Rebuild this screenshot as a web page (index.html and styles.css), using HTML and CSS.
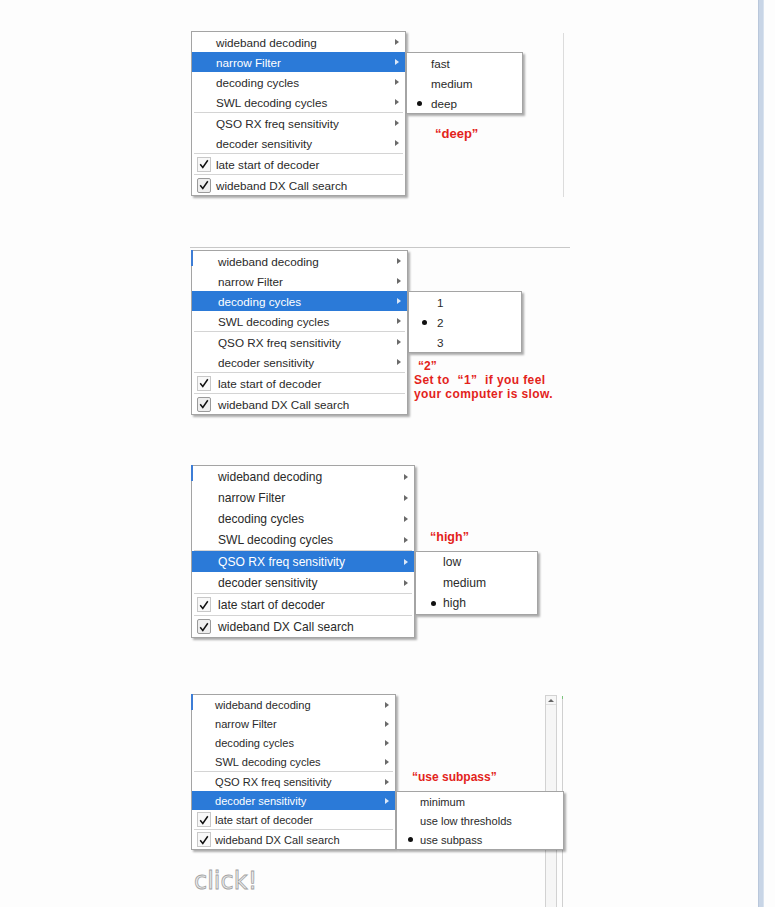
FILE: index.html
```html
<!DOCTYPE html>
<html lang="en">
<head>
<meta charset="utf-8">
<title>Decoder menu settings</title>
<link rel="stylesheet" href="styles.css">
</head>
<body>
<div class="page">
  <main class="content">

    <section class="fig fig1">
      <div class="menu">
        <div class="item"><span class="icon"></span><span class="label">wideband decoding</span><span class="arrow"></span></div>
        <div class="item active"><span class="icon"></span><span class="label">narrow Filter</span><span class="arrow"></span>
          <div class="submenu">
            <div class="sub-item"><span class="mark"></span>fast</div>
            <div class="sub-item"><span class="mark"></span>medium</div>
            <div class="sub-item"><span class="mark"><span class="dot"></span></span>deep</div>
          </div>
        </div>
        <div class="item"><span class="icon"></span><span class="label">decoding cycles</span><span class="arrow"></span></div>
        <div class="item"><span class="icon"></span><span class="label">SWL decoding cycles</span><span class="arrow"></span></div>
        <div class="sep"></div>
        <div class="item"><span class="icon"></span><span class="label">QSO RX freq sensitivity</span><span class="arrow"></span></div>
        <div class="item"><span class="icon"></span><span class="label">decoder sensitivity</span><span class="arrow"></span></div>
        <div class="sep"></div>
        <div class="item"><span class="icon"><span class="checkbox"><svg width="10" height="10" viewBox="0 0 10 10"><path d="M1.2 5.2 L3.8 8.4 L8.8 1.2" fill="none" stroke="#111" stroke-width="1.5"/></svg></span></span><span class="label">late start of decoder</span></div>
        <div class="sep"></div>
        <div class="item"><span class="icon"><span class="checkbox ghosted"><svg width="10" height="10" viewBox="0 0 10 10"><path d="M1.2 5.2 L3.8 8.4 L8.8 1.2" fill="none" stroke="#111" stroke-width="1.5"/></svg></span></span><span class="label">wideband DX Call search</span></div>
      </div>
      <div class="vline"></div>
      <div class="note note1">“deep”</div>
    </section>

    <section class="fig fig2">
      <div class="menu">
        <div class="item"><span class="icon"></span><span class="label">wideband decoding</span><span class="arrow"></span></div>
        <div class="item"><span class="icon"></span><span class="label">narrow Filter</span><span class="arrow"></span></div>
        <div class="item active"><span class="icon"></span><span class="label">decoding cycles</span><span class="arrow"></span>
          <div class="submenu">
            <div class="sub-item"><span class="mark"></span>1</div>
            <div class="sub-item"><span class="mark"><span class="dot"></span></span>2</div>
            <div class="sub-item"><span class="mark"></span>3</div>
          </div>
        </div>
        <div class="item"><span class="icon"></span><span class="label">SWL decoding cycles</span><span class="arrow"></span></div>
        <div class="sep"></div>
        <div class="item"><span class="icon"></span><span class="label">QSO RX freq sensitivity</span><span class="arrow"></span></div>
        <div class="item"><span class="icon"></span><span class="label">decoder sensitivity</span><span class="arrow"></span></div>
        <div class="sep"></div>
        <div class="item"><span class="icon"><span class="checkbox"><svg width="10" height="10" viewBox="0 0 10 10"><path d="M1.2 5.2 L3.8 8.4 L8.8 1.2" fill="none" stroke="#111" stroke-width="1.5"/></svg></span></span><span class="label">late start of decoder</span></div>
        <div class="sep"></div>
        <div class="item"><span class="icon"><span class="checkbox ghosted"><svg width="10" height="10" viewBox="0 0 10 10"><path d="M1.2 5.2 L3.8 8.4 L8.8 1.2" fill="none" stroke="#111" stroke-width="1.5"/></svg></span></span><span class="label">wideband DX Call search</span></div>
      </div>
      <div class="note note2"><span class="first">“2”</span><br>Set to <span class="wq-l">“</span>1<span class="wq-r">”</span> if you feel<br>your computer is slow.</div>
    </section>

    <section class="fig fig3">
      <div class="menu">
        <div class="item"><span class="icon"></span><span class="label">wideband decoding</span><span class="arrow"></span></div>
        <div class="item"><span class="icon"></span><span class="label">narrow Filter</span><span class="arrow"></span></div>
        <div class="item"><span class="icon"></span><span class="label">decoding cycles</span><span class="arrow"></span></div>
        <div class="item"><span class="icon"></span><span class="label">SWL decoding cycles</span><span class="arrow"></span></div>
        <div class="sep"></div>
        <div class="item active"><span class="icon"></span><span class="label">QSO RX freq sensitivity</span><span class="arrow"></span>
          <div class="submenu">
            <div class="sub-item"><span class="mark"></span>low</div>
            <div class="sub-item"><span class="mark"></span>medium</div>
            <div class="sub-item"><span class="mark"><span class="dot"></span></span>high</div>
          </div>
        </div>
        <div class="item"><span class="icon"></span><span class="label">decoder sensitivity</span><span class="arrow"></span></div>
        <div class="sep"></div>
        <div class="item"><span class="icon"><span class="checkbox"><svg width="10" height="10" viewBox="0 0 10 10"><path d="M1.2 5.2 L3.8 8.4 L8.8 1.2" fill="none" stroke="#111" stroke-width="1.5"/></svg></span></span><span class="label">late start of decoder</span></div>
        <div class="sep"></div>
        <div class="item"><span class="icon"><span class="checkbox ghosted"><svg width="10" height="10" viewBox="0 0 10 10"><path d="M1.2 5.2 L3.8 8.4 L8.8 1.2" fill="none" stroke="#111" stroke-width="1.5"/></svg></span></span><span class="label">wideband DX Call search</span></div>
      </div>
      <div class="note note3">“high”</div>
    </section>

    <section class="fig fig4">
      <div class="menu-col">
        <div class="menu">
          <div class="item"><span class="icon"></span><span class="label">wideband decoding</span><span class="arrow"></span></div>
          <div class="item"><span class="icon"></span><span class="label">narrow Filter</span><span class="arrow"></span></div>
          <div class="item"><span class="icon"></span><span class="label">decoding cycles</span><span class="arrow"></span></div>
          <div class="item"><span class="icon"></span><span class="label">SWL decoding cycles</span><span class="arrow"></span></div>
          <div class="sep"></div>
          <div class="item"><span class="icon"></span><span class="label">QSO RX freq sensitivity</span><span class="arrow"></span></div>
          <div class="item active"><span class="icon"></span><span class="label">decoder sensitivity</span><span class="arrow"></span>
            <div class="submenu">
              <div class="sub-item"><span class="mark"></span>minimum</div>
              <div class="sub-item"><span class="mark"></span>use low thresholds</div>
              <div class="sub-item"><span class="mark"><span class="dot"></span></span>use subpass</div>
            </div>
          </div>
          <div class="item"><span class="icon"><span class="checkbox"><svg width="10" height="10" viewBox="0 0 10 10"><path d="M1.2 5.2 L3.8 8.4 L8.8 1.2" fill="none" stroke="#111" stroke-width="1.5"/></svg></span></span><span class="label">late start of decoder</span></div>
          <div class="sep"></div>
          <div class="item"><span class="icon"><span class="checkbox"><svg width="10" height="10" viewBox="0 0 10 10"><path d="M1.2 5.2 L3.8 8.4 L8.8 1.2" fill="none" stroke="#111" stroke-width="1.5"/></svg></span></span><span class="label">wideband DX Call search</span></div>
        </div>
        <div class="click">click!</div>
      </div>
      <div class="scroll"><div class="scroll-up"><span class="up-tri"></span></div></div>
      <div class="rline"></div>
      <div class="note note4">“use subpass”</div>
    </section>

  </main>
  <div class="rule"></div>
  <div class="after"></div>
</div>
</body>
</html>
```

FILE: styles.css
```css
* { box-sizing: border-box; }

html, body {
  margin: 0;
  padding: 0;
  background: #fdfdfd;
}

body {
  font-family: "Liberation Sans", Arial, sans-serif;
  color: #2a2a2a;
}

.page {
  display: flex;
  width: 775px;
  height: 907px;
  overflow: hidden;
}

.content {
  flex: none;
  width: 758px;
  padding-left: 190px;
  display: flex;
  flex-direction: column;
}

.rule {
  flex: none;
  width: 6px;
  background: #c8d5e6;
  border-left: 1px solid #b9c7db;
  border-right: 1px solid #d8e2ee;
}

.after {
  flex: 1;
  background: #fdfdfd;
}

/* ---------- figures ---------- */
.fig {
  position: relative;
  width: 380px;
  display: flex;
  align-items: flex-start;
  flex: none;
}

.fig1 {
  margin-top: 31px;
  height: 166px;
  --mw: 215px; --row: 20px; --tx: 24px; --fs: 11.7px;
  --sw: 117px; --srow: 20px; --stx: 24px; --dx: 12px;
}

.fig2 {
  margin-top: 50px;
  height: 168px;
  border-top: 1px solid #c8c8c8;
  padding-top: 2px;
  --mw: 217px; --row: 20px; --tx: 26px; --fs: 11.7px;
  --sw: 114px; --srow: 20px; --stx: 28px; --dx: 15px;
}

.fig3 {
  margin-top: 50px;
  height: 173px;
  --mw: 224px; --row: 21px; --tx: 26px; --fs: 12.1px;
  --sw: 123px; --srow: 20.5px; --stx: 27px; --dx: 17px;
}

.fig4 {
  margin-top: 54px;
  height: 215px;
  --mw: 205px; --row: 19px; --tx: 23px; --fs: 11.1px;
  --sw: 168px; --srow: 19px; --stx: 23px; --dx: 13px;
}

.fig4 .menu { margin-top: 2px; }

.menu-col {
  display: flex;
  flex-direction: column;
  align-items: flex-start;
}

/* ---------- menu ---------- */
.menu {
  position: relative;
  z-index: 1;
  flex: none;
  margin-left: 1px;
  width: var(--mw);
  background: #fff;
  border: 1px solid #a4a4a4;
  box-shadow: 2px 2px 2px rgba(0, 0, 0, 0.32);
  font-size: var(--fs);
}

.fig2 .menu::before,
.fig3 .menu::before,
.fig4 .menu::before {
  content: "";
  position: absolute;
  left: -1px;
  top: -1px;
  width: 2px;
  height: 16px;
  background: #3d7dd6;
}

.item {
  position: relative;
  display: flex;
  align-items: center;
  height: var(--row);
  white-space: nowrap;
}

.item.active {
  background: #2b7ad8;
  color: #fff;
}

.icon {
  flex: none;
  width: var(--tx);
  height: 100%;
  display: flex;
  align-items: center;
  padding-left: 5px;
}

.arrow {
  margin-left: auto;
  margin-right: 6px;
  width: 0;
  height: 0;
  border-top: 3.5px solid transparent;
  border-bottom: 3.5px solid transparent;
  border-left: 4px solid #6a6a6a;
}

.item.active .arrow {
  border-left-color: #dce8f8;
}

.sep {
  height: 1px;
  margin: 0 2px;
  background: #d4d4d4;
}

.checkbox {
  width: 14px;
  height: 15px;
  border: 1px solid #c8c8c8;
  background: #f8f8f8;
  display: flex;
  align-items: center;
  justify-content: center;
}

/* checkbox half covered by the faded "click!" caption of the screenshot */
.checkbox.ghosted {
  border-color: #9a9a9a;
  border-radius: 2px;
  background: #eeeeee;
}

/* ---------- submenu ---------- */
.submenu {
  position: absolute;
  top: 0;
  left: calc(100% + 1px);
  z-index: 3;
  width: var(--sw);
  background: #fff;
  color: #2a2a2a;
  border: 1px solid #a4a4a4;
  box-shadow: 2px 2px 2px rgba(0, 0, 0, 0.32);
}

.sub-item {
  display: flex;
  align-items: center;
  height: var(--srow);
  white-space: nowrap;
}

.mark {
  position: relative;
  flex: none;
  width: var(--stx);
  height: 100%;
}

.dot {
  position: absolute;
  left: var(--dx);
  top: 50%;
  width: 5px;
  height: 5px;
  margin: -2.5px 0 0 -2.5px;
  border-radius: 50%;
  background: #111;
}

/* ---------- annotations ---------- */
.note {
  position: absolute;
  color: #e3231b;
  font-weight: bold;
  font-size: 12px;
  line-height: 14px;
  white-space: nowrap;
}

.note1 { left: 245px; top: 96px; font-size: 13px; }
.note2 { left: 224px; top: 111px; letter-spacing: 0.4px; }
.note2 .first { padding-left: 4px; letter-spacing: 0; }
.note2 .wq-l { margin-left: 4px; }
.note2 .wq-r { margin-right: 4px; }
.note3 { left: 240px; top: 65px; font-size: 12.5px; }
.note4 { left: 222px; top: 78px; }

.click {
  margin-top: 19px;
  margin-left: 4px;
  font-family: "DejaVu Sans", sans-serif;
  font-size: 24px;
  line-height: 24px;
  color: #ececec;
  -webkit-text-stroke: 0.8px #a2a2a2;
  white-space: nowrap;
}

/* ---------- background window pieces ---------- */
.vline {
  flex: none;
  align-self: stretch;
  margin: 2px 6px 0 auto;
  width: 1px;
  background: #dcdcdc;
}

.scroll {
  flex: none;
  align-self: stretch;
  margin: 3px 0 0 auto;
  width: 12px;
  border: 1px solid #d2d2d2;
  border-bottom: none;
  background: #f6f6f6;
}

.scroll-up {
  height: 9px;
  border-bottom: 1px solid #dedede;
  display: flex;
  align-items: center;
  justify-content: center;
}

.up-tri {
  width: 0;
  height: 0;
  border-left: 3px solid transparent;
  border-right: 3px solid transparent;
  border-bottom: 3px solid #666;
}

.rline {
  flex: none;
  align-self: stretch;
  margin: 4px 7px 0 5px;
  width: 1px;
  background: #d0d0d0;
  border-top: 3px solid #7cc47c;
}
```
